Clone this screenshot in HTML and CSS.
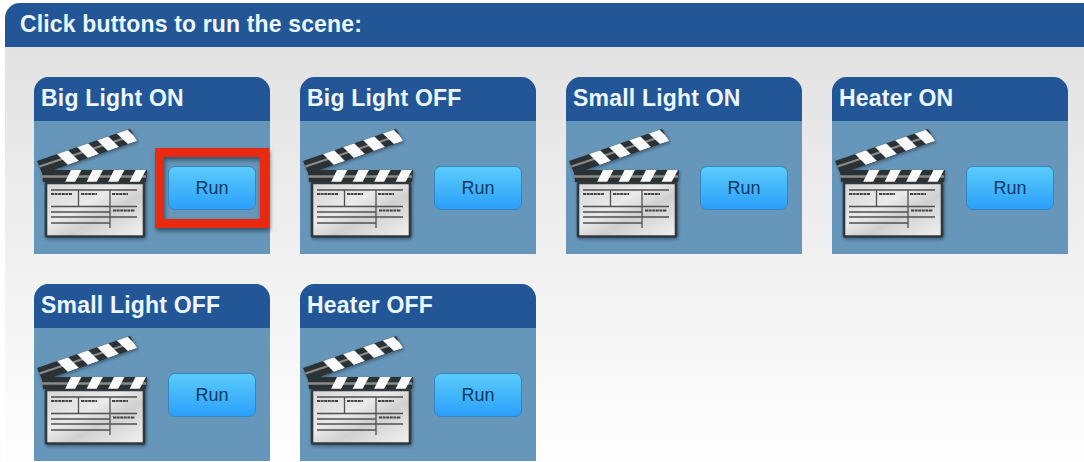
FILE: index.html
```
<!DOCTYPE html>
<html>
<head>
  <meta charset="utf-8">
  <title>Scenes</title>
  <link rel="stylesheet" href="styles.css">
</head>
<body>
  <!-- clapperboard shared by all scene cards -->
  <svg class="defs" width="0" height="0">
    <defs>
      <linearGradient id="board" x1="0" y1="0" x2="1" y2="1">
        <stop offset="0" stop-color="#d6d6d6"/>
        <stop offset="0.4" stop-color="#eaeaea"/>
        <stop offset="0.6" stop-color="#d0d0d0"/>
        <stop offset="1" stop-color="#f2f2f2"/>
      </linearGradient>
      <clipPath id="arm"><path d="M3 48 L96 16 L103 28 L22 56 L9 62 Z"/></clipPath>
      <filter id="shadow" x="-10%" y="-10%" width="125%" height="125%">
        <feDropShadow dx="1" dy="1.5" stdDeviation="1.4" flood-color="#123" flood-opacity="0.5"/>
      </filter>
      <symbol id="clapper" viewBox="0 0 120 133">
        <g filter="url(#shadow)">
          <path d="M3 48 L96 16 L103 28 L22 56 L9 62 Z" fill="#2a3136"/>
          <g clip-path="url(#arm)">
            <path d="M4 54 L100 22" stroke="#8d8a86" stroke-width="2.2"/>
            <path d="M21 39 L32 35 L45 48 L34 52 Z M41 32 L52 28 L65 41 L54 45 Z M61 25 L72 21 L85 34 L74 38 Z M81 19 L92 15 L105 28 L94 31 Z" fill="#fafafa"/>
          </g>
          <path d="M8 57 H113 L112 69 H9 Z" fill="#2a3136"/>
          <path d="M8 63.5 H112" stroke="#8d8a86" stroke-width="2.5"/>
          <path d="M37 57 H47.5 L41 69 H31 Z M58.5 57 H69 L62.5 69 H52.5 Z M80 57 H90.5 L84 69 H74 Z M101.5 57 H112 L105.5 69 H95.5 Z" fill="#fafafa"/>
          <rect x="12" y="70" width="98" height="53.5" rx="1" fill="url(#board)" stroke="#31373a" stroke-width="2.6"/>
        </g>
        <path d="M17 77 H103 M17 93.5 H103 M17 99 H76 M17 104 H103 M17 110 H76 M44.5 77 V93.5 M76 77 V115" stroke="#505050" stroke-width="1.3" fill="none"/>
        <path d="M17 81 H38 M47 81 H63 M78 81 H94 M79 97.5 H101" stroke="#444" stroke-width="2.2" stroke-dasharray="3 0.6"/>
      </symbol>
    </defs>
  </svg>

  <div class="panel">
    <h1 class="panel-title">Click buttons to run the scene:</h1>
    <div class="scenes">
      <div class="scene">
        <h2>Big Light ON</h2>
        <div class="scene-body">
          <svg class="clapper"><use href="#clapper"/></svg>
          <div class="run-wrap marked"><button class="run">Run</button></div>
        </div>
      </div>
      <div class="scene">
        <h2>Big Light OFF</h2>
        <div class="scene-body">
          <svg class="clapper"><use href="#clapper"/></svg>
          <div class="run-wrap"><button class="run">Run</button></div>
        </div>
      </div>
      <div class="scene">
        <h2>Small Light ON</h2>
        <div class="scene-body">
          <svg class="clapper"><use href="#clapper"/></svg>
          <div class="run-wrap"><button class="run">Run</button></div>
        </div>
      </div>
      <div class="scene">
        <h2>Heater ON</h2>
        <div class="scene-body">
          <svg class="clapper"><use href="#clapper"/></svg>
          <div class="run-wrap"><button class="run">Run</button></div>
        </div>
      </div>
      <div class="scene">
        <h2>Small Light OFF</h2>
        <div class="scene-body">
          <svg class="clapper"><use href="#clapper"/></svg>
          <div class="run-wrap"><button class="run">Run</button></div>
        </div>
      </div>
      <div class="scene">
        <h2>Heater OFF</h2>
        <div class="scene-body">
          <svg class="clapper"><use href="#clapper"/></svg>
          <div class="run-wrap"><button class="run">Run</button></div>
        </div>
      </div>
    </div>
  </div>
</body>
</html>
```
FILE: styles.css
```
* {
  box-sizing: border-box;
}
body {
  margin: 0;
  height: 462px;
  padding: 3px 0 0 5px;
  overflow: hidden;
  background: #fff;
  font-family: "Liberation Sans", Arial, sans-serif;
}
.defs {
  position: absolute;
}
.panel {
  height: 459px;
  border-radius: 15px 0 0 0;
  background: linear-gradient(#e2e2e2 44px, #fdfdfd 440px);
}
.panel-title {
  margin: 0;
  height: 44px;
  padding-left: 15px;
  border-radius: 15px 0 0 0;
  background: #235697;
  color: #ecf7ff;
  font-size: 23px;
  line-height: 42px;
  letter-spacing: 0.15px;
}
.scenes {
  display: grid;
  grid-template-columns: repeat(4, 236px);
  grid-auto-rows: 177px;
  gap: 30px;
  padding: 30px 0 0 29px;
}
.scene {
  border-radius: 15px 15px 0 0;
  background: #6696b9;
}
.scene h2 {
  margin: 0;
  height: 44px;
  padding-left: 7px;
  border-radius: 15px 15px 0 0;
  background: #235697;
  color: #ecf7ff;
  font-size: 23px;
  line-height: 42px;
  letter-spacing: 0.2px;
  white-space: nowrap;
}
.scene-body {
  display: flex;
  height: 133px;
}
.clapper {
  flex: none;
  width: 120px;
  height: 133px;
  margin-top: -8px;
}
.run-wrap {
  flex: none;
  width: 114px;
  height: 80px;
  margin: 27px 0 0 1px;
  padding: 9px 4px 0 4px;
  border: 9px solid transparent;
}
.marked {
  border-color: #ea2a10;
  box-shadow: 1px 3px 4px rgba(20, 40, 60, 0.6), inset 1px 3px 4px rgba(20, 40, 60, 0.6);
}
.run {
  display: block;
  width: 88px;
  height: 44px;
  padding: 0;
  border: 1px solid #3586c0;
  border-radius: 7px;
  background: linear-gradient(#5accfb, #2b9ffa);
  color: #0b3a5c;
  font-family: inherit;
  font-size: 18px;
}
```
